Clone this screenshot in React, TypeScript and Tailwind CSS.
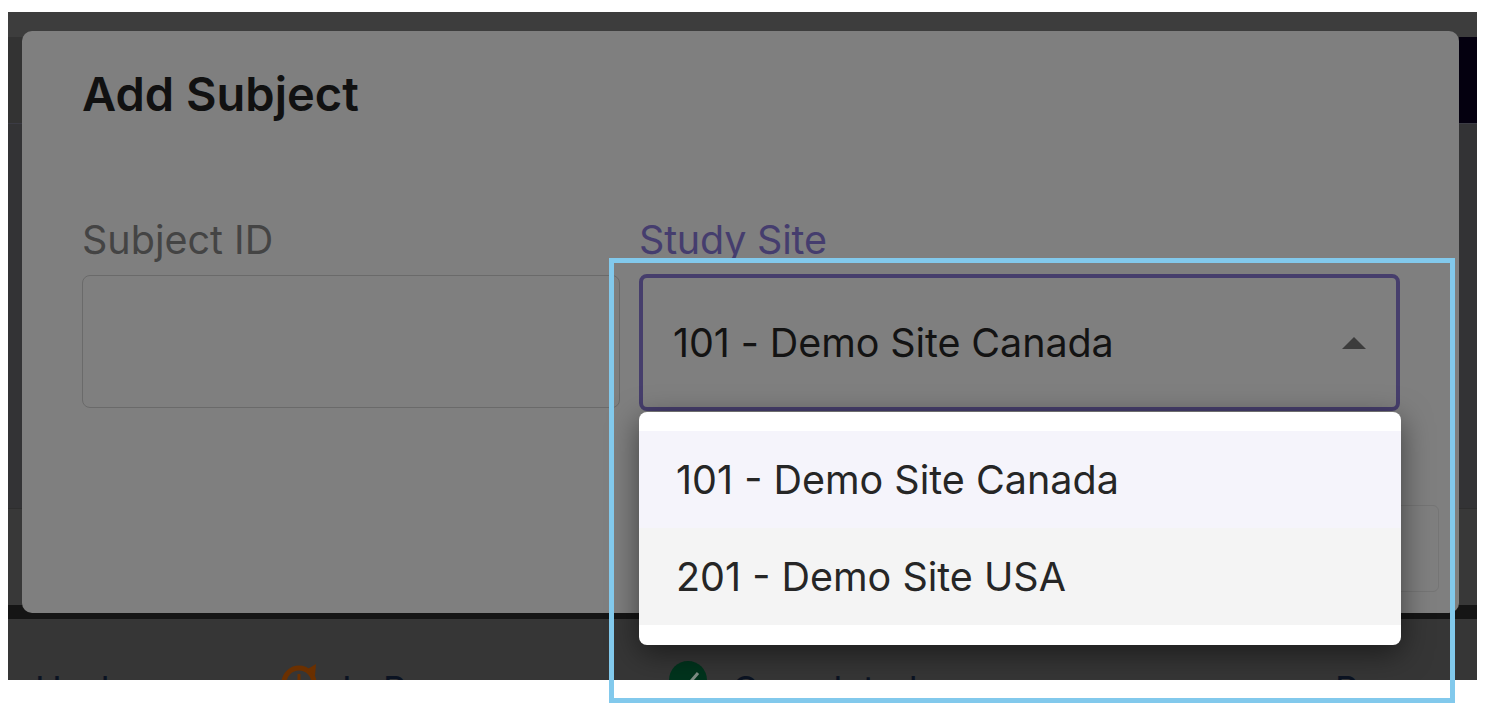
export default function App() {
  return (
    <div className="h-[718px] w-[1489px] bg-white pl-[8px] pt-[12px] relative overflow-hidden font-['Inter',sans-serif]">
      {/* dimmed page behind the dialog */}
      <div className="relative h-[668px] w-[1469px] bg-[#363636] overflow-hidden">
        <div className="h-[25px] bg-[#3d3d3d]" />
        <div className="flex h-[87px] justify-end bg-[#333333] border-b border-[#3b3b44]">
          <div className="w-[18px] bg-[#04000f]" />
        </div>
        <div className="h-[384px] bg-[#333335]" />
        <div className="h-[97px] border-t border-[#2e2e2e] bg-[#383838]" />
        <div className="h-[14px] bg-[#151515]" />
        <div className="h-[61px] bg-[#363636] pl-[27px] pt-[48px] flex text-[#0b1322] text-[36px] leading-[44px]">
          <span className="w-[245px] tracking-[-1px]">Unclear</span>
          <svg viewBox="0 0 40 40" className="h-[40px] w-[40px] -mt-[4px] shrink-0">
            <circle cx="19" cy="20" r="15" fill="none" stroke="#6b3000" strokeWidth="5" />
            <path d="M26 7l10-6-1 12z" fill="#6b3000" />
            <path d="M19 11v8" stroke="#6b3000" strokeWidth="3" />
          </svg>
          <span className="ml-[22px] w-[327px]">In Progress</span>
          <svg viewBox="0 0 38 38" className="-mt-[6px] h-[38px] w-[38px] shrink-0">
            <circle cx="19" cy="19" r="19" fill="#01341d" />
            <path d="M11 20l6 6 12-14" fill="none" stroke="#7f8f86" strokeWidth="3" />
          </svg>
          <span className="ml-[25px] w-[603px]">Completed</span>
          <span>Pass</span>
        </div>

        {/* dialog */}
        <div className="absolute left-[14px] top-[19px] h-[582px] w-[1437px] rounded-[10px] bg-[#7f7f7f] pl-[60px] pt-[36px]">
          <h2 className="text-[47px] leading-[54px] font-semibold text-[#111111]">Add Subject</h2>
          <div className="mt-[95px] flex gap-[19px]">
            <div className="w-[538px]">
              <label className="block text-[39.5px] leading-[48px] text-[#444444]">Subject ID</label>
              <div className="mt-[11px] h-[133px] rounded-[8px] border border-[#6a6a6a]" />
            </div>
            <div className="w-[761px]">
              <label className="block text-[39.5px] leading-[48px] tracking-[-0.2px] text-[#453d6e]">Study Site</label>
              <div className="mt-[10px] flex h-[137px] items-center justify-between rounded-[8px] border-4 border-[#463e6c] pl-[30px] pr-[30px] text-[39.5px] text-[#131313]">
                <span className="pt-[2px] tracking-[-0.1px]">101 - Demo Site Canada</span>
                <svg viewBox="0 0 24 12" className="h-[12px] w-[24px]">
                  <path d="M0 12L12 0l12 12z" fill="#3c3c3c" />
                </svg>
              </div>
            </div>
          </div>
          <div className="absolute right-[20px] top-[474px] h-[87px] w-[60px] rounded-[6px] border border-[#757575]" />
        </div>

        {/* open menu */}
        <div className="absolute left-[631px] top-[400px] w-[762px] rounded-[8px] bg-white pt-[19px] pb-[20px] text-[39.5px] text-[#262626] shadow-[0_8px_30px_rgba(0,0,0,0.5)]">
          <div className="flex h-[97px] items-center bg-[#f5f4fb] pl-[37px] pt-[2px]">101 - Demo Site Canada</div>
          <div className="flex h-[97px] items-center bg-[#f4f4f4] pl-[37px] pt-[2px]">201 - Demo Site USA</div>
        </div>
      </div>

      {/* highlight frame */}
      <div className="absolute left-[609px] top-[258px] h-[445px] w-[846px] border-[5px] border-[#82c9ec]" />
    </div>
  )
}
